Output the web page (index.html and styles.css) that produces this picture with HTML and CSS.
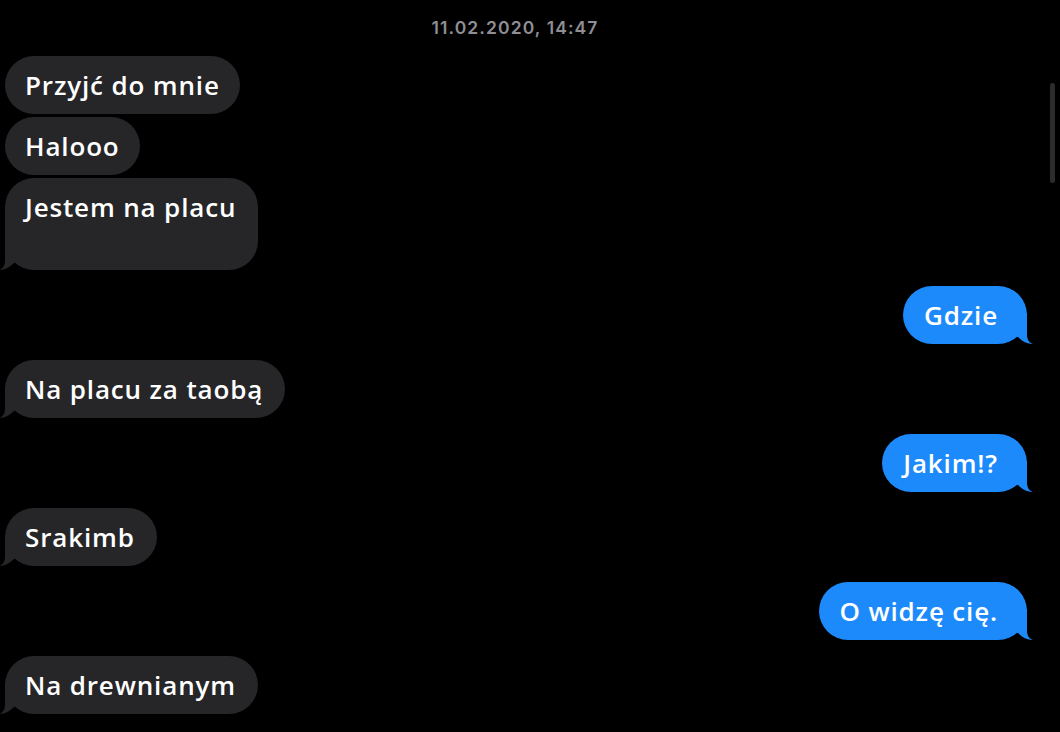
FILE: index.html
```html
<!DOCTYPE html>
<html lang="pl">
<head>
<meta charset="utf-8">
<title>Wiadomości</title>
<link rel="stylesheet" href="styles.css">
</head>
<body>
<main class="chat">
  <div class="timestamp">11.02.2020, 14:47</div>

  <section class="group in">
    <div class="bubble">Przyjć do mnie</div>
    <div class="bubble">Halooo</div>
    <div class="bubble tall tailed">Jestem na placu
      <svg class="tail" width="30" height="31" viewBox="0 0 30 31"><path d="M6 0 L6 22 C6 26 4 30 0 31 C5 31 10 29 15 24 L26 20 L24 0 Z"/></svg>
    </div>
  </section>

  <section class="group out">
    <div class="bubble tailed">Gdzie
      <svg class="tail" width="30" height="31" viewBox="0 0 30 31"><path d="M24 0 L24 22 C24 26 26 30 30 31 C25 31 20 29 15 24 L4 20 L6 0 Z"/></svg>
    </div>
  </section>

  <section class="group in">
    <div class="bubble tailed">Na placu za taobą
      <svg class="tail" width="30" height="31" viewBox="0 0 30 31"><path d="M6 0 L6 22 C6 26 4 30 0 31 C5 31 10 29 15 24 L26 20 L24 0 Z"/></svg>
    </div>
  </section>

  <section class="group out">
    <div class="bubble tailed">Jakim!?
      <svg class="tail" width="30" height="31" viewBox="0 0 30 31"><path d="M24 0 L24 22 C24 26 26 30 30 31 C25 31 20 29 15 24 L4 20 L6 0 Z"/></svg>
    </div>
  </section>

  <section class="group in">
    <div class="bubble tailed">Srakimb
      <svg class="tail" width="30" height="31" viewBox="0 0 30 31"><path d="M6 0 L6 22 C6 26 4 30 0 31 C5 31 10 29 15 24 L26 20 L24 0 Z"/></svg>
    </div>
  </section>

  <section class="group out">
    <div class="bubble tailed">O widzę cię.
      <svg class="tail" width="30" height="31" viewBox="0 0 30 31"><path d="M24 0 L24 22 C24 26 26 30 30 31 C25 31 20 29 15 24 L4 20 L6 0 Z"/></svg>
    </div>
  </section>

  <section class="group in">
    <div class="bubble tailed">Na drewnianym
      <svg class="tail" width="30" height="31" viewBox="0 0 30 31"><path d="M6 0 L6 22 C6 26 4 30 0 31 C5 31 10 29 15 24 L26 20 L24 0 Z"/></svg>
    </div>
  </section>
</main>
<div class="scrollbar"></div>
</body>
</html>
```

FILE: styles.css
```css
html, body {
  margin: 0;
  padding: 0;
  background: #000;
  height: 100%;
  overflow: hidden;
}

body {
  font-family: "Open Sans", "Noto Sans", "Liberation Sans", sans-serif;
  color: #fff;
}

.chat {
  display: flex;
  flex-direction: column;
  gap: 16px;
  padding-top: 18px;
}

.timestamp {
  font-family: Inter, "Noto Sans", sans-serif;
  text-align: center;
  font-size: 17.5px;
  line-height: 20px;
  font-weight: 600;
  color: #8e8e93;
  margin-bottom: 2px;
  padding-right: 30px;
  letter-spacing: 1.1px;
}

.group {
  display: flex;
  flex-direction: column;
  gap: 3px;
}

.group.in {
  align-items: flex-start;
  padding-left: 5px;
}

.group.out {
  align-items: flex-end;
  padding-right: 33px;
}

.bubble {
  position: relative;
  font-size: 26px;
  line-height: 34px;
  font-weight: 600;
  padding: 12px 20px;
  border-radius: 29px;
  background: #262629;
  white-space: nowrap;
  letter-spacing: 0.85px;
}

.in .bubble.tailed {
  padding-right: 22px;
}

.bubble.tall {
  padding-bottom: 46px;
  padding-right: 25px;
}

.out .bubble {
  background: #1d8afc;
  padding-left: 21px;
  padding-right: 29px;
}

.tail {
  position: absolute;
  bottom: 0;
  display: block;
}

.in .tail {
  left: -6px;
  fill: #262629;
}

.out .tail {
  right: -6px;
  fill: #1d8afc;
}

.scrollbar {
  position: fixed;
  top: 83px;
  right: 5px;
  width: 5px;
  height: 100px;
  border-radius: 3px;
  background: #2c2c2e;
}
```
